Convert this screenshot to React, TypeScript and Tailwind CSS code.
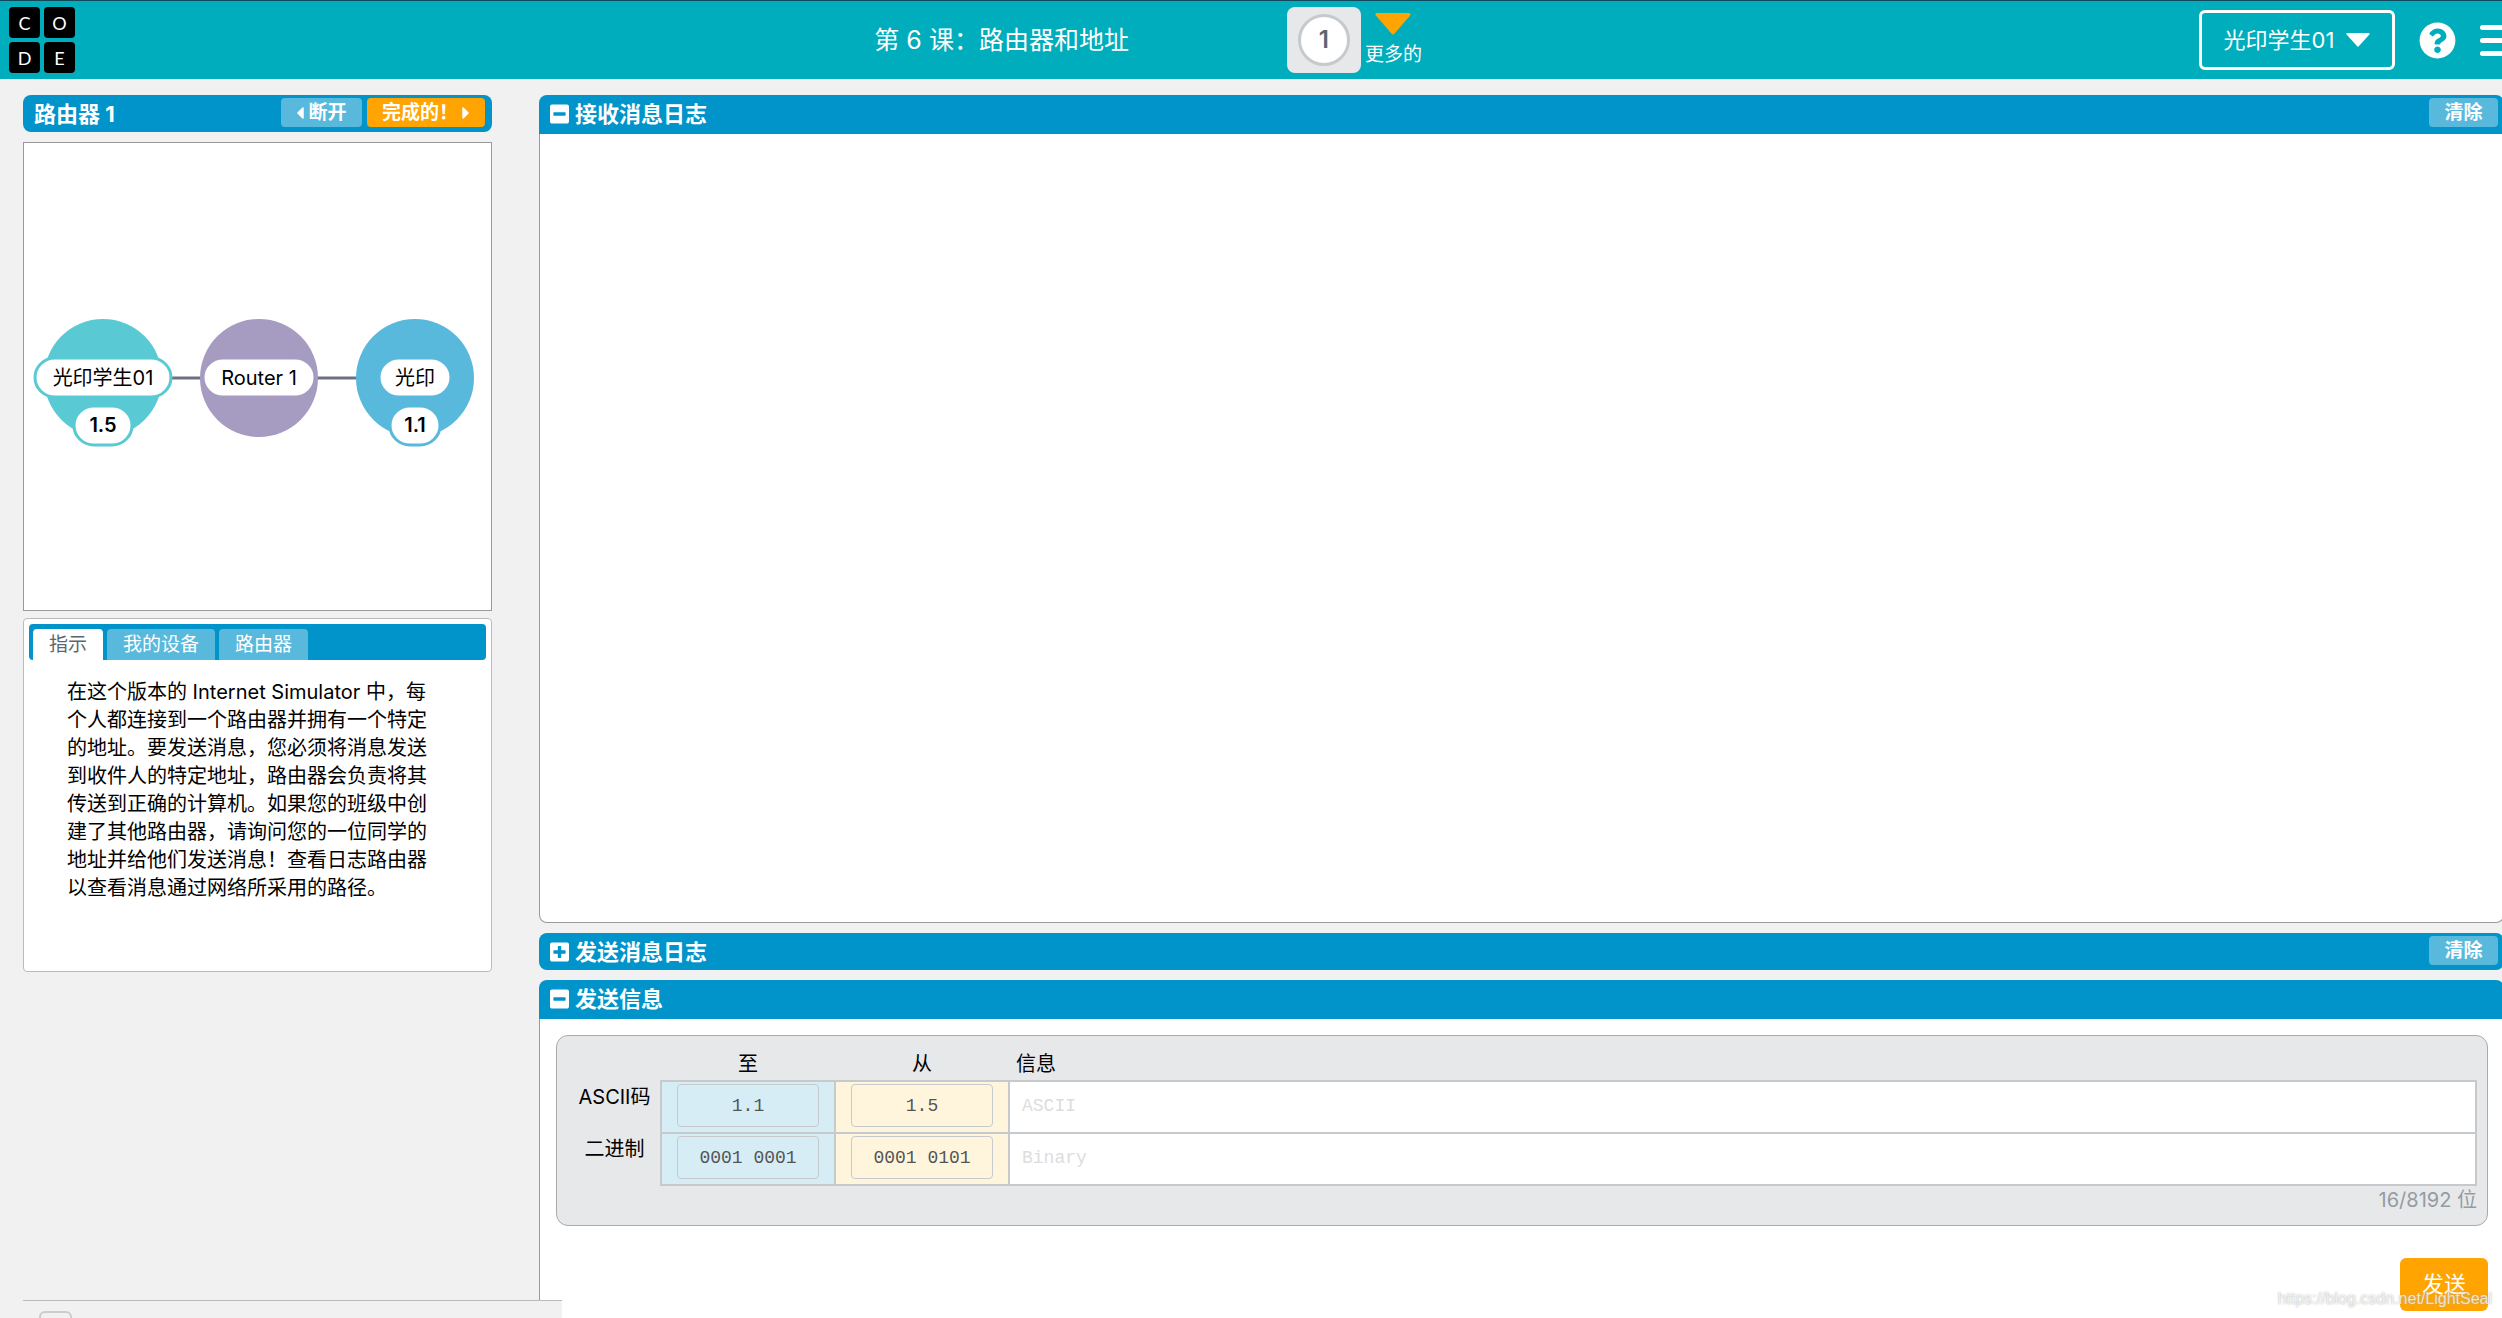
import { useState } from 'react';
import type { ReactNode } from 'react';
import { FaMinusSquare, FaPlusSquare, FaQuestionCircle, FaCaretLeft, FaCaretRight } from 'react-icons/fa';

const LOGO = ['C', 'O', 'D', 'E'];

const TABS = ['指示', '我的设备', '路由器'];

interface SimNode {
  name: string;
  address?: string;
  x: number;
  color: string;
  nameWidth: number;
  addressWidth: number;
}

const NODES: SimNode[] = [
  { name: '光印学生01', address: '1.5', x: -156, color: '#59cad3', nameWidth: 136, addressWidth: 58 },
  { name: 'Router 1', x: 0, color: '#a69bc1', nameWidth: 112, addressWidth: 0 },
  { name: '光印', address: '1.1', x: 156, color: '#59b9dc', nameWidth: 72, addressWidth: 50 },
];

const ROWS = [
  { label: 'ASCII码', to: '1.1', from: '1.5', placeholder: 'ASCII' },
  { label: '二进制', to: '0001 0001', from: '0001 0101', placeholder: 'Binary' },
];

function Triangle({ className }: { className: string }) {
  return (
    <svg viewBox="0 0 36 22" preserveAspectRatio="none" className={className} aria-hidden="true">
      <path d="M2 1.5h32L18 20z" fill="currentColor" stroke="currentColor" strokeWidth="3" strokeLinejoin="round" />
    </svg>
  );
}

function Header() {
  return (
    <header className="grid h-[79px] shrink-0 grid-cols-[17fr_auto_21fr] items-center border-t border-[#12495a] bg-[#00adbc] text-white">
      <a href="#" aria-label="Code" className="ml-[9px] grid w-fit grid-cols-2 gap-1">
        {LOGO.map((letter) => (
          <span
            key={letter}
            className="flex size-[31px] items-center justify-center rounded bg-black font-['Lato'] text-[18px] leading-none"
          >
            {letter}
          </span>
        ))}
      </a>
      <div className="flex items-center">
        <h1 className="mr-[158px] text-[25px] leading-8">第 6 课：路由器和地址</h1>
        <div className="flex h-[66px] w-[74px] items-center justify-center rounded-lg bg-[#e7e8ea]">
          <a
            href="#"
            className="flex size-[52px] items-center justify-center rounded-full border-[3px] border-[#c6cacd] bg-white text-[24px] font-semibold text-[#5b6770]"
          >
            1
          </a>
        </div>
        <button className="ml-1 flex flex-col items-center gap-2">
          <Triangle className="h-[22px] w-9 text-[#ffa400]" />
          <span className="text-[19px] leading-6">更多的</span>
        </button>
      </div>
      <div className="flex items-center justify-end overflow-hidden">
        <button className="flex h-[60px] w-[196px] items-center justify-center gap-3 rounded-md border-[3px] border-white text-[22px]">
          <span>光印学生01</span>
          <Triangle className="h-[14px] w-6" />
        </button>
        <button aria-label="帮助" className="ml-6">
          <FaQuestionCircle size={37} />
        </button>
        <button aria-label="菜单" className="-mr-2 ml-6 flex w-[30px] flex-col gap-2">
          <span className="h-[5px] rounded-sm bg-white" />
          <span className="h-[5px] rounded-sm bg-white" />
          <span className="h-[5px] rounded-sm bg-white" />
        </button>
      </div>
    </header>
  );
}

function NetworkDiagram() {
  return (
    <svg viewBox="-235 -235 467 467" className="block w-full">
      <line x1="-156" x2="156" stroke="#6d7083" strokeWidth="3" />
      {NODES.map((node) => (
        <g key={node.name} transform={`translate(${node.x} 0)`}>
          <circle r="59" fill={node.color} />
          <rect
            x={-node.nameWidth / 2}
            y="-20"
            width={node.nameWidth}
            height="39"
            rx="20"
            fill="#fff"
            stroke={node.color}
            strokeWidth="3"
          />
          <text y="7" textAnchor="middle" fontSize="20">
            {node.name}
          </text>
          {node.address && (
            <>
              <rect
                x={-node.addressWidth / 2}
                y="28"
                width={node.addressWidth}
                height="39"
                rx="20"
                fill="#fff"
                stroke={node.color}
                strokeWidth="3"
              />
              <text y="54" textAnchor="middle" fontSize="20" fontWeight="600">
                {node.address}
              </text>
            </>
          )}
        </g>
      ))}
    </svg>
  );
}

function Sidebar() {
  const [tab, setTab] = useState(0);

  return (
    <aside className="w-[469px] shrink-0">
      <div className="flex h-[37px] items-start rounded-lg bg-[#0094ca] pt-[3px] pr-[7px] pl-[11px] font-bold text-white">
        <h2 className="mr-auto text-[22px] leading-8">路由器 1</h2>
        <button className="flex h-[29px] w-[81px] items-center justify-center gap-1 rounded bg-[#59b9dc] text-[19px] leading-none">
          <FaCaretLeft size={20} className="w-2" />
          断开
        </button>
        <button className="ml-[5px] flex h-[29px] w-[118px] items-center justify-center gap-1 rounded bg-[#ffa400] text-[19px] leading-none">
          完成的！
          <FaCaretRight size={20} className="w-2" />
        </button>
      </div>

      <div className="mt-[10px] border border-[#999] bg-white">
        <NetworkDiagram />
      </div>

      <section className="mt-[7px] h-[354px] rounded border border-[#bbb] bg-white p-[5px]">
        <div role="tablist" className="flex h-9 items-end gap-1 rounded bg-[#0094ca] pl-1">
          {TABS.map((label, i) => (
            <button
              key={label}
              role="tab"
              aria-selected={i === tab}
              onClick={() => setTab(i)}
              className={`h-[31px] rounded-t px-4 text-[19px] leading-none ${
                i === tab ? 'bg-white text-[#5b6770]' : 'bg-[#59b9dc] text-white'
              }`}
            >
              {label}
            </button>
          ))}
        </div>
        <p className="mt-[18px] mr-12 ml-[38px] text-[20px] leading-7">
          在这个版本的 Internet Simulator 中，每个人都连接到一个路由器并拥有一个特定的地址。要发送消息，您必须将消息发送到收件人的特定地址，路由器会负责将其传送到正确的计算机。如果您的班级中创建了其他路由器，请询问您的一位同学的地址并给他们发送消息！查看日志路由器以查看消息通过网络所采用的路径。
        </p>
      </section>
    </aside>
  );
}

interface PanelProps {
  title: string;
  open?: boolean;
  clearable?: boolean;
  className?: string;
  children?: ReactNode;
}

function Panel({ title, open = false, clearable = false, className = '', children }: PanelProps) {
  const Icon = open ? FaMinusSquare : FaPlusSquare;

  return (
    <section className={`flex flex-col ${className}`}>
      <div
        className={`flex shrink-0 items-start bg-[#0094ca] pt-[3px] pr-[6px] pl-[11px] font-bold text-white ${
          open ? 'h-[39px] rounded-t-lg' : 'h-[37px] rounded-lg'
        }`}
      >
        <button aria-expanded={open} className="mr-auto flex items-center gap-[6px] text-[22px] leading-8">
          <Icon size={22} className="w-[19px]" />
          {title}
        </button>
        {clearable && (
          <button className="h-[29px] w-[69px] rounded bg-[#59b9dc] text-[19px] leading-none">清除</button>
        )}
      </div>
      {open && <div className="grow rounded-b-lg border border-t-0 border-[#999] bg-white">{children}</div>}
    </section>
  );
}

function SendForm() {
  const field =
    "h-[43px] w-full rounded border border-[#c6cacd] text-center font-['Liberation_Mono',monospace] text-[18px] text-[#555]";

  return (
    <form className="pt-4 pr-[15px] pl-4" onSubmit={(e) => e.preventDefault()}>
      <div className="h-[191px] rounded-xl border border-[#aaa] bg-[#e7e8ea] pr-[10px] pl-3">
        <table className="w-full table-fixed border-collapse text-[20px]">
          <colgroup>
            <col className="w-[92px]" />
            <col className="w-[174px]" />
            <col className="w-[174px]" />
            <col />
          </colgroup>
          <thead>
            <tr className="h-[45px] leading-7">
              <td />
              <th className="pt-3 font-normal">至</th>
              <th className="pt-3 font-normal">从</th>
              <th className="pt-3 pl-[7px] text-left font-normal">信息</th>
            </tr>
          </thead>
          <tbody>
            {ROWS.map((row) => (
              <tr key={row.label} className="h-[52px]">
                <th className="pt-0.5 align-top leading-7 font-normal">{row.label}</th>
                <td className="border-2 border-[#c6cacd] bg-[#d6edf6] px-[15px] pb-[3px]">
                  <input aria-label={`${row.label} 至`} defaultValue={row.to} className={field} />
                </td>
                <td className="border-2 border-[#c6cacd] bg-[#fff5dd] px-[15px] pb-[3px]">
                  <input aria-label={`${row.label} 从`} readOnly value={row.from} className={field} />
                </td>
                <td className="border-2 border-[#c6cacd] bg-white px-3">
                  <input
                    aria-label={`${row.label} 信息`}
                    placeholder={row.placeholder}
                    className="block h-11 w-full pb-0.5 font-['Liberation_Mono',monospace] text-[18px] placeholder:text-[#ddd]"
                  />
                </td>
              </tr>
            ))}
          </tbody>
        </table>
        <p className="text-right text-[20px] leading-7 text-[#949ca2]">16/8192 位</p>
      </div>
      <div className="mt-8 flex justify-end">
        <button className="h-[53px] w-[88px] rounded-md bg-[#ffa400] text-[22px] text-white">发送</button>
      </div>
    </form>
  );
}

export default function App() {
  return (
    <div className="relative flex h-screen flex-col overflow-hidden bg-[#f1f1f1] font-['Inter','Noto_Sans_CJK_SC',sans-serif] text-black">
      <Header />
      <main className="flex min-h-0 grow gap-[47px] pt-4 pl-[23px]">
        <Sidebar />
        <div className="-mr-0.5 flex min-w-0 grow flex-col gap-[10px]">
          <Panel title="接收消息日志" open clearable className="h-[828px] shrink-0" />
          <Panel title="发送消息日志" clearable />
          <Panel title="发送信息" open className="-mb-4 grow">
            <SendForm />
          </Panel>
        </div>
      </main>

      {/* footer strip floats over the panels */}
      <footer className="absolute bottom-0 left-[23px] h-[18px] w-[539px] overflow-hidden border-t border-[#bbb] bg-[#f1f1f1] pt-[10px] pl-4">
        <div className="h-10 w-[33px] rounded-md border-2 border-[#ccc]" />
      </footer>
      <span className="pointer-events-none absolute right-[10px] bottom-[7px] font-['Liberation_Sans',sans-serif] text-[16px] leading-6 text-white/70 [text-shadow:0_0_2px_#aaa]">
        https://blog.csdn.net/LightSeal
      </span>
    </div>
  );
}
